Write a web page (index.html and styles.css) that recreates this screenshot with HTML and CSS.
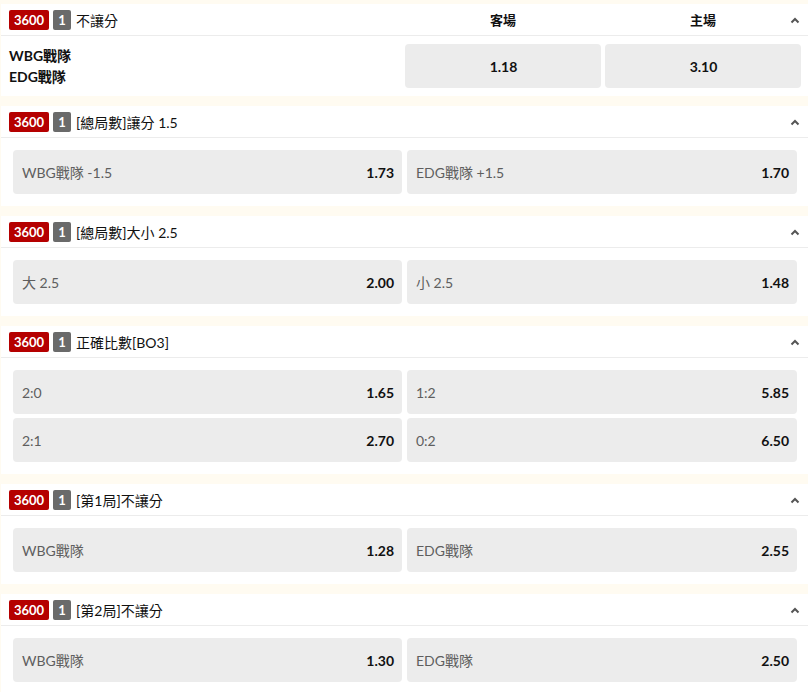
FILE: index.html
```html
<!DOCTYPE html>
<html lang="zh-Hant">
<head>
<meta charset="utf-8">
<link rel="stylesheet" href="styles.css">
</head>
<body>
<div class="page">
  <section class="card">
    <div class="head grid3">
      <div class="title"><span class="b-red">3600</span><span class="b-gray">1</span><span class="t">不讓分</span></div>
      <div class="colh">客場</div>
      <div class="colh">主場</div>
      <svg class="chev" width="10" height="7" viewBox="0 0 10 7"><polyline points="1.5,5.5 5,2 8.5,5.5" fill="none" stroke="#555" stroke-width="2"/></svg>
    </div>
    <div class="body1 grid3">
      <div class="teams"><div>WBG戰隊</div><div>EDG戰隊</div></div>
      <div class="odd c">1.18</div>
      <div class="odd c">3.10</div>
    </div>
  </section>

  <section class="card">
    <div class="head">
      <div class="title"><span class="b-red">3600</span><span class="b-gray">1</span><span class="t">[總局數]讓分 1.5</span></div>
      <svg class="chev" width="10" height="7" viewBox="0 0 10 7"><polyline points="1.5,5.5 5,2 8.5,5.5" fill="none" stroke="#555" stroke-width="2"/></svg>
    </div>
    <div class="body grid2">
      <div class="odd"><span class="lbl">WBG戰隊 -1.5</span><span class="val">1.73</span></div>
      <div class="odd"><span class="lbl">EDG戰隊 +1.5</span><span class="val">1.70</span></div>
    </div>
  </section>

  <section class="card">
    <div class="head">
      <div class="title"><span class="b-red">3600</span><span class="b-gray">1</span><span class="t">[總局數]大小 2.5</span></div>
      <svg class="chev" width="10" height="7" viewBox="0 0 10 7"><polyline points="1.5,5.5 5,2 8.5,5.5" fill="none" stroke="#555" stroke-width="2"/></svg>
    </div>
    <div class="body grid2">
      <div class="odd"><span class="lbl">大 2.5</span><span class="val">2.00</span></div>
      <div class="odd"><span class="lbl">小 2.5</span><span class="val">1.48</span></div>
    </div>
  </section>

  <section class="card">
    <div class="head">
      <div class="title"><span class="b-red">3600</span><span class="b-gray">1</span><span class="t">正確比數[BO3]</span></div>
      <svg class="chev" width="10" height="7" viewBox="0 0 10 7"><polyline points="1.5,5.5 5,2 8.5,5.5" fill="none" stroke="#555" stroke-width="2"/></svg>
    </div>
    <div class="body grid2">
      <div class="odd"><span class="lbl">2:0</span><span class="val">1.65</span></div>
      <div class="odd"><span class="lbl">1:2</span><span class="val">5.85</span></div>
      <div class="odd"><span class="lbl">2:1</span><span class="val">2.70</span></div>
      <div class="odd"><span class="lbl">0:2</span><span class="val">6.50</span></div>
    </div>
  </section>

  <section class="card">
    <div class="head">
      <div class="title"><span class="b-red">3600</span><span class="b-gray">1</span><span class="t">[第1局]不讓分</span></div>
      <svg class="chev" width="10" height="7" viewBox="0 0 10 7"><polyline points="1.5,5.5 5,2 8.5,5.5" fill="none" stroke="#555" stroke-width="2"/></svg>
    </div>
    <div class="body grid2">
      <div class="odd"><span class="lbl">WBG戰隊</span><span class="val">1.28</span></div>
      <div class="odd"><span class="lbl">EDG戰隊</span><span class="val">2.55</span></div>
    </div>
  </section>

  <section class="card">
    <div class="head">
      <div class="title"><span class="b-red">3600</span><span class="b-gray">1</span><span class="t">[第2局]不讓分</span></div>
      <svg class="chev" width="10" height="7" viewBox="0 0 10 7"><polyline points="1.5,5.5 5,2 8.5,5.5" fill="none" stroke="#555" stroke-width="2"/></svg>
    </div>
    <div class="body grid2">
      <div class="odd"><span class="lbl">WBG戰隊</span><span class="val">1.30</span></div>
      <div class="odd"><span class="lbl">EDG戰隊</span><span class="val">2.50</span></div>
    </div>
  </section>
</div>
</body>
</html>
```

FILE: styles.css
```css
html, body {
  margin: 0;
  padding: 0;
  background: #fffbf1;
}
body {
  font-family: Lato, "Noto Sans CJK TC", sans-serif;
  font-size: 14px;
  color: #111;
  overflow: hidden;
}
.page {
  padding-top: 4px;
  padding-left: 1px;
}
.card {
  background: #fff;
  margin-bottom: 10px;
}
.head {
  position: relative;
  height: 31px;
  border-bottom: 1px solid #ececec;
  display: flex;
  align-items: center;
}
.head.grid3 {
  display: grid;
}
.grid3 {
  display: grid;
  grid-template-columns: 1fr 196px 196px;
  column-gap: 4px;
  padding-right: 7px;
}
.title {
  display: flex;
  align-items: center;
  padding-left: 8px;
}
.b-red, .b-gray {
  display: inline-flex;
  align-items: center;
  justify-content: center;
  height: 20px;
  border-radius: 2px;
  color: #fff;
  font-weight: 700;
  font-size: 13px;
}
.b-red {
  width: 40px;
  background: #b50000;
}
.b-gray {
  width: 18px;
  margin-left: 4px;
  background: #6a6a6a;
}
.t {
  margin-left: 5px;
  font-size: 14px;
  color: #111;
}
.colh {
  text-align: center;
  font-weight: 700;
  font-size: 13px;
  color: #111;
}
.chev {
  position: absolute;
  right: 8px;
  top: 13px;
}
.body1 {
  padding-top: 8px;
  padding-bottom: 8px;
}
.teams {
  display: flex;
  flex-direction: column;
  justify-content: center;
  padding-left: 8px;
  font-weight: 700;
  line-height: 21px;
}
.body {
  padding: 12px 11px 12px 12px;
}
.grid2 {
  display: grid;
  grid-template-columns: 389px 390px;
  column-gap: 5px;
  row-gap: 4px;
}
.odd {
  height: 44px;
  background: #ececec;
  border-radius: 4px;
  display: flex;
  align-items: center;
  justify-content: space-between;
  padding: 0 8px 0 9px;
}
.odd.c {
  justify-content: center;
  font-weight: 700;
}
.lbl {
  color: #5e5e5e;
}
.val {
  font-weight: 700;
  color: #111;
}
```
